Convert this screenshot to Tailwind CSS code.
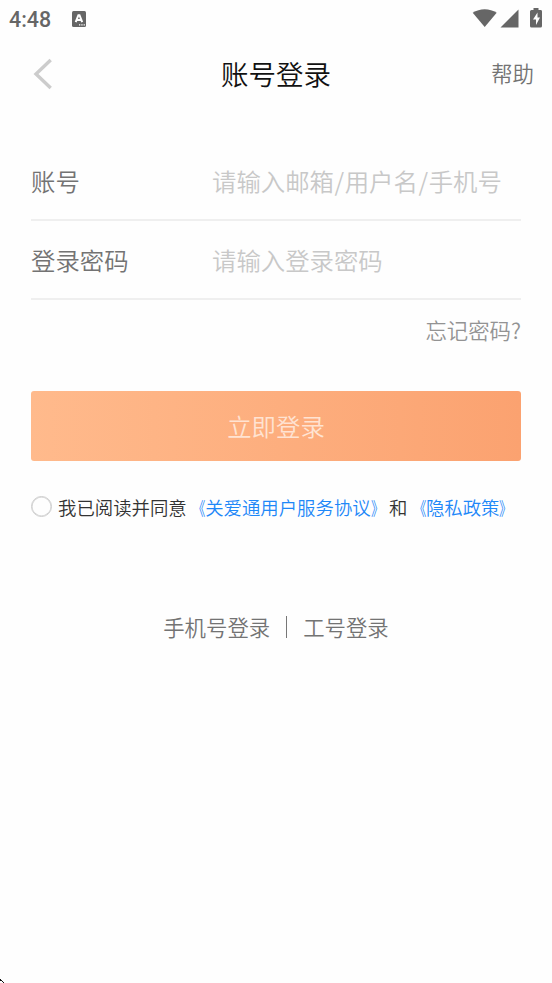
<!DOCTYPE html>
<html lang="zh-CN">
<head>
<meta charset="utf-8">
<title>账号登录</title>
<script src="https://cdn.jsdelivr.net/npm/@tailwindcss/browser@4"></script>
</head>
<body class="relative h-[983px] w-[552px] overflow-hidden bg-[#fefefe] font-['Noto_Sans_CJK_SC_DemiLight','Noto_Sans_CJK_SC',sans-serif] font-[350] text-[#737373]">
  <div class="flex h-[37px] items-center pl-[9px] pr-[10px] text-[#666]">
    <span class="mt-[2px] w-[63px] font-[Roboto,sans-serif] text-[21.4px] leading-none font-medium">4:48</span>
    <svg class="h-[16px] w-[14px]" viewBox="0 0 14 16"><rect width="14" height="16" rx="1.5" fill="#666"/><path d="M3.7 11.2 6.400 4.200h1.100l2.700 7M4.900 8.900h4.200" fill="none" stroke="#fff" stroke-width="2"/><path d="M7 13.2h1.3v1.3H7zM9.3 13.2h1.3v1.3H9.3zM11.6 13.2h1.3v1.3h-1.3z" fill="#fff"/></svg>
    <svg class="-mt-px ml-auto h-[20px] w-[70px]" viewBox="0 0 70 20" fill="#666"><path d="M.7 4.800C7.700-.1 17.700-.1 24.700 4.800L12.700 19z"/><path d="M46.500 1.500V19.500H28.500z"/><path fill-rule="evenodd" d="M61.500 0h5v2h2.500q1 0 1 1.500V18q0 1.500-1.500 1.500h-9Q58 19.500 58 18V3.500Q58 2 59.500 2h2zM65.500 4.500 61 11.500h3v5.500l4-7.500h-2.500z"/></svg>
  </div>
  <header class="grid h-[72px] grid-cols-[1fr_auto_1fr] items-center px-[18px]">
    <svg class="mt-[2px] ml-[15px] h-[32px] w-[20px]" viewBox="0 0 20 32" fill="none" stroke="#ccc" stroke-width="3.4"><path d="M17.700 2 3 16l14.700 14"/></svg>
    <h1 class="text-[27.5px] leading-[40px] text-[#111]">账号登录</h1>
    <a class="text-right text-[21.4px] leading-[32px]">帮助</a>
  </header>
  <main class="px-[31px] pt-[32px]">
    <div class="flex h-[80px] items-center border-b-2 border-[#efefef] pt-[2px] text-[24.4px] leading-[36px]">
      <span class="w-[181px]">账号</span><span class="text-[#c8c8c8]">请输入邮箱<span class="px-[0.6px]">/</span>用户名<span class="px-[0.6px]">/</span>手机号</span>
    </div>
    <div class="flex h-[79px] items-center border-b-2 border-[#efefef] text-[24.4px] leading-[36px]">
      <span class="w-[181px]">登录密码</span><span class="text-[#c8c8c8]">请输入登录密码</span>
    </div>
    <div class="mt-[14px] text-right text-[21.4px] leading-[32px] text-[#939393]">忘记密码?</div>
    <div class="mt-[45px] flex h-[70px] items-center justify-center rounded-[3px] bg-linear-to-r from-[#ffba8c] to-[#fba270] text-[24.4px] leading-[36px] text-[#ffe3d2]">立即登录</div>
    <div class="mt-[31px] flex h-[28px] items-center whitespace-nowrap text-[18.4px] leading-[28px] text-[#333]">
      <span class="mr-[6px] size-[21px] shrink-0 rounded-full border-[1.5px] border-[#ccc] shadow-[inset_0_0_0_0.5px_#ccc]"></span>
      <span class="flex pt-px">我已阅读并同意<span class="flex text-[#1e88f8]"><span class="origin-right scale-x-[0.7]">《</span>关爱通用户服务协议<span class="origin-left scale-x-[0.7]">》</span></span>和<span class="flex text-[#1e88f8]"><span class="origin-right scale-x-[0.7]">《</span>隐私政策<span class="origin-left scale-x-[0.7]">》</span></span></span>
    </div>
    <div class="mt-[91px] flex h-[32px] items-center justify-center text-[21.4px] leading-[32px]">
      <span>手机号登录</span><span class="mx-[16px] h-[22px] w-px bg-[#777]"></span><span>工号登录</span>
    </div>
  </main>
  <svg class="absolute bottom-0 left-0 h-[4px] w-[4px]" viewBox="0 0 4 4"><path d="M0 0h1v1h1v1H0zM2 2h1v1H2zM3 3h1v1H3z" fill="#111"/></svg>
</body>
</html>
